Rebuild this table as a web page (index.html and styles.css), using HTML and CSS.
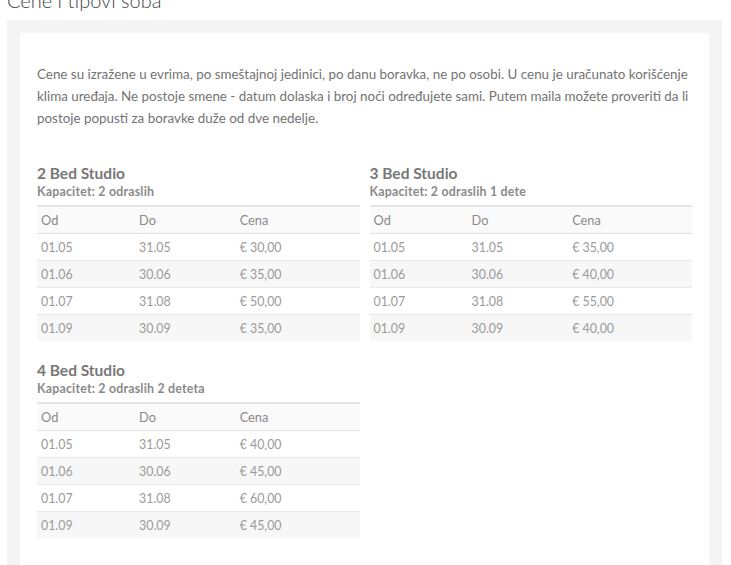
FILE: index.html
```html
<!DOCTYPE html>
<html lang="sr">
<head>
<meta charset="utf-8">
<title>Cene i tipovi soba</title>
<link rel="stylesheet" href="styles.css">
</head>
<body>
<h2 class="page-title">Cene i tipovi soba</h2>
<div class="panel">
  <div class="card">
    <p class="intro">Cene su izražene u evrima, po smeštajnoj jedinici, po danu boravka, ne po osobi. U cenu je uračunato korišćenje klima uređaja. Ne postoje smene - datum dolaska i broj noći određujete sami. Putem maila možete proveriti da li postoje popusti za boravke duže od dve nedelje.</p>
    <div class="rooms">
      <section class="room">
        <h3 class="room-name">2 Bed Studio</h3>
        <p class="cap">Kapacitet: 2 odraslih</p>
        <table class="prices">
          <thead><tr><th class="c1">Od</th><th class="c2">Do</th><th>Cena</th></tr></thead>
          <tbody>
            <tr><td>01.05</td><td>31.05</td><td>€ 30,00</td></tr>
            <tr><td>01.06</td><td>30.06</td><td>€ 35,00</td></tr>
            <tr><td>01.07</td><td>31.08</td><td>€ 50,00</td></tr>
            <tr><td>01.09</td><td>30.09</td><td>€ 35,00</td></tr>
          </tbody>
        </table>
      </section>
      <section class="room">
        <h3 class="room-name">3 Bed Studio</h3>
        <p class="cap">Kapacitet: 2 odraslih 1 dete</p>
        <table class="prices">
          <thead><tr><th class="c1">Od</th><th class="c2">Do</th><th>Cena</th></tr></thead>
          <tbody>
            <tr><td>01.05</td><td>31.05</td><td>€ 35,00</td></tr>
            <tr><td>01.06</td><td>30.06</td><td>€ 40,00</td></tr>
            <tr><td>01.07</td><td>31.08</td><td>€ 55,00</td></tr>
            <tr><td>01.09</td><td>30.09</td><td>€ 40,00</td></tr>
          </tbody>
        </table>
      </section>
      <section class="room">
        <h3 class="room-name">4 Bed Studio</h3>
        <p class="cap">Kapacitet: 2 odraslih 2 deteta</p>
        <table class="prices">
          <thead><tr><th class="c1">Od</th><th class="c2">Do</th><th>Cena</th></tr></thead>
          <tbody>
            <tr><td>01.05</td><td>31.05</td><td>€ 40,00</td></tr>
            <tr><td>01.06</td><td>30.06</td><td>€ 45,00</td></tr>
            <tr><td>01.07</td><td>31.08</td><td>€ 60,00</td></tr>
            <tr><td>01.09</td><td>30.09</td><td>€ 45,00</td></tr>
          </tbody>
        </table>
      </section>
    </div>
  </div>
</div>
</body>
</html>
```

FILE: styles.css
```css
html, body {
  margin: 0;
  padding: 0;
  background: #fff;
  font-family: Lato, "Open Sans", Arial, sans-serif;
  color: #777;
  overflow: hidden;
}

.page-title {
  margin: -12px 0 0 7px;
  height: 32px;
  font-size: 20px;
  line-height: 24px;
  font-weight: 300;
  color: #444;
}

.panel {
  margin: 0 9px 0 7px;
  padding: 13px 13px 0;
  background: #f4f4f4;
  height: 600px;
}

.card {
  background: #fff;
  padding: 30px 17px 40px;
  height: 600px;
}

.intro {
  margin: 0;
  font-size: 13.4px;
  line-height: 22px;
  color: #737373;
}

.rooms {
  margin-top: 35px;
  display: grid;
  grid-template-columns: 1fr 1fr;
  column-gap: 10px;
  row-gap: 20px;
}

.room-name {
  margin: 0;
  font-size: 15.5px;
  line-height: 18px;
  font-weight: 700;
  color: #777;
}

.cap {
  margin: 1px 0 4px;
  font-size: 12.4px;
  line-height: 18px;
  letter-spacing: 0.2px;
  font-weight: 700;
  color: #8a8a8a;
}

.prices {
  width: 100%;
  border-collapse: collapse;
  font-size: 12.4px;
  color: #9a9a9a;
}

.prices th {
  text-align: left;
  font-weight: 400;
  font-size: 12.8px;
  color: #8a8a8a;
  height: 26px;
  padding: 0 4px;
  border-top: 2px solid #e4e4e4;
  border-bottom: 1px solid #e4e4e4;
  background: #fafafa;
}

.prices td {
  height: 26px;
  padding: 0 4px;
  border-bottom: 1px solid #e8e8e8;
}

.prices tbody tr:nth-child(even) td {
  background: #f7f7f7;
}

.prices tbody tr:last-child td {
  border-bottom: 0;
}

.c1 { width: 30.4%; }
.c2 { width: 31.2%; }
```
